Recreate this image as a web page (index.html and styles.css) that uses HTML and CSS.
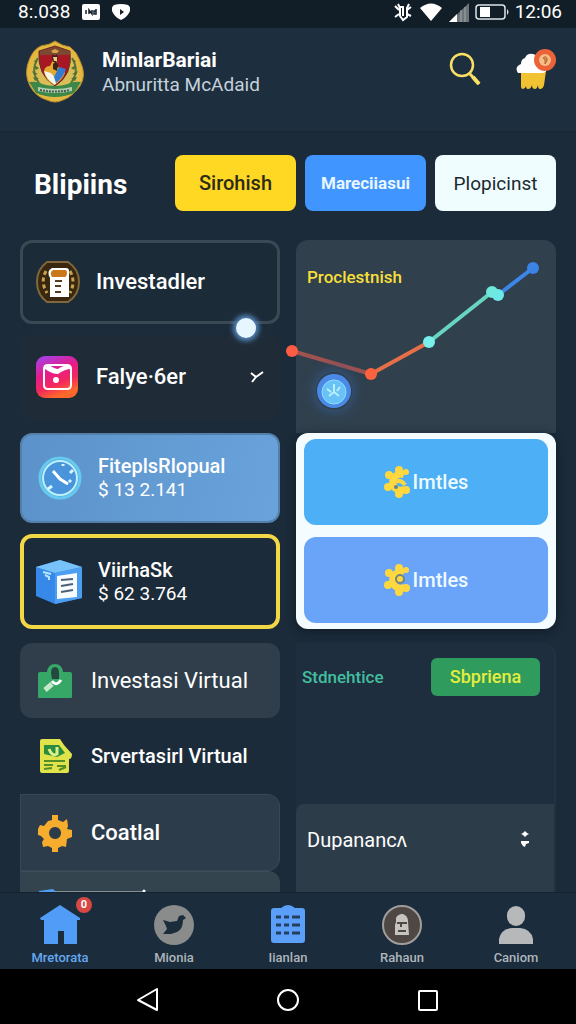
FILE: index.html
```html
<!DOCTYPE html>
<html lang="id">
  <head>
    <meta charset="UTF-8" />
    <meta name="viewport" content="width=device-width, initial-scale=1.0" />
    <title>MinlarBariai</title>
    <link rel="stylesheet" href="styles.css">
  </head>
  <body>
    <div class="status-bar">
      <span class="status-time">8:.038</span>
      <svg width="18" height="16" viewBox="0 0 18 16"><rect width="18" height="16" rx="2" fill="#fff"/><path d="M4 10V6M7 10V6l3 4V6M14 5v5h-2V7h2" fill="none" stroke="#14212b" stroke-width="1.5"/></svg>
      <svg width="18" height="16" viewBox="0 0 18 16"><path d="M2 1q7-2 14 0 4 3 1 8-3 5-8 7-5-2-8-7-3-5 1-8z" fill="#fff"/><path d="M8 5l4 3-4 3z" fill="#14212b"/></svg>
      <div class="status-right">
        <svg width="20" height="20" viewBox="0 0 20 20" fill="none" stroke="#fff" stroke-width="2"><path d="M5 2l2 4v8l3 4 4-3V6l2-4M10 4v10M2 4l4 4M2 15l4-3M18 5l-4 3M18 14l-4-2M7 5h3"/></svg>
        <svg width="24" height="18" viewBox="0 0 24 18"><path d="M1 5Q12-4 23 5L12 18z" fill="#fff"/></svg>
        <svg width="20" height="19" viewBox="0 0 20 19"><path d="M20 0v19H0z" fill="#6c7479"/><path d="M8 11v8H0z" fill="#fff"/><path d="M12 7v12M16 4v15" stroke="#a4a9ac"/></svg>
        <svg width="34" height="16" viewBox="0 0 34 16"><rect x="1" y="1" width="29" height="14" rx="3" fill="none" stroke="#dfe5e8" stroke-width="1.5"/><path d="M32 5q3 3 0 6z" fill="#dfe5e8"/><rect x="5" y="3" width="10" height="10" fill="#fff"/></svg>
        <span class="status-time">12:06</span>
      </div>
    </div>

    <header class="header">
      <svg width="60" height="64" viewBox="0 0 60 64">
        <path d="M30 1q7 5 15 6 7 5 10 14 7 14 0 25-8 11-17 14-8 4-16 0Q11 57 5 46-2 33 5 18 9 9 16 6q9-1 14-5z" fill="#e4b83f" stroke="#b48a2b"/>
        <path d="M30 6q6 4 13 5 6 5 8 12 5 12 1 20-6 9-14 12-8 4-15 0Q12 51 8 43q-4-9 1-21 3-7 9-11 7-1 12-5z" fill="#d9bd58"/>
        <path d="M14 11l16-5 15 5q3 24-15 35Q12 35 14 11z" fill="#a81724" stroke="#603522"/>
        <path d="M15 11l15-4 15 4v4H15z" fill="#7b4931"/>
        <path d="M26 11l4-2 4 2-2 2h-4z" fill="#d8a24a"/>
        <path d="M19 31q1-5 6-5l3-6 4 1v6q7 1 8 6-3 8-11 12-9-5-10-14z" fill="#e2aa2f"/>
        <path d="M27 18l1-4 2 2 2-2 1 5-2 3h-3zM28 24l3-3 2 4-1 6-4-2z" fill="#3a2418"/>
        <path d="M28 17h4v4h-3z" fill="#f0cb82"/>
        <path d="M19 31l7 2 4 5 6-4-6 11q-9-6-11-14z" fill="#f4f4ea"/>
        <path d="M34 27l7 2q-3 9-10 14l-2-6z" fill="#337bd0"/>
        <path d="M13 18q-8 13 1 25M47 18q8 13-1 25" fill="none" stroke="#5a7436" stroke-width="2"/>
        <g fill="#52702d"><path d="M13 19l-4 2 2 3zM9 25l5 3-3 2zM7 31l6 3-4 1zM8 37l6 1-4 3zM47 19l4 2-2 3zM51 25l-5 3 3 2zM53 31l-6 3 4 1zM52 37l-6 1 4 3z"/></g>
        <path d="M4 42q9-1 13 2 13 4 26 0 4-3 13-2l-7 11q-19 8-38 0z" fill="#3d8748"/>
        <path d="M13 47q17 4 34 0v4q-17 4-34 0z" fill="#b5ceb0"/>
        <path d="M15 50q15 3 30 0" fill="none" stroke="#405f51" stroke-width="2" stroke-dasharray="2 1"/>
      </svg>
      <div class="profile">
        <h1 class="profile-name">MinlarBariai</h1>
        <p class="profile-sub">Abnuritta McAdaid</p>
      </div>
      <button class="icon-button" type="button" aria-label="Search">
        <svg width="32" height="34" viewBox="0 0 32 34" fill="none" stroke="#f9df62"><circle cx="13" cy="13" r="11" stroke-width="2.5"/><path d="M21 22l9 10" stroke-width="3"/><path d="M24 25l6 7" stroke-width="4"/></svg>
      </button>
      <button class="icon-button" type="button" aria-label="Rewards">
        <svg width="40" height="42" viewBox="0 0 40 42"><path d="M5 23h25l-2 14q-1 4-4 4-2 0-2-4-1 4-3 4-3 0-3-4-1 4-4 4-2 0-2-3-1 3-3 3-2 0-2-3z" fill="#f1c232"/><path d="M2 25q-4-6 3-9 0-5 4-6 2-5 8-4l8 3 6 12q-1 4-5 4z" fill="#fff"/><circle cx="29" cy="12" r="11" fill="#ec6339"/><circle cx="29" cy="12" r="6" fill="#f7bd86"/><path d="M27 10q3-3 4 0 1 3-2 6v-4z" fill="#d98b43" stroke="#b5693a"/></svg>
      </button>
    </header>

    <main class="content">
      <div class="toolbar">
        <h2 class="toolbar-title">Blipiins</h2>
        <button class="pill pill-yellow" type="button">Sirohish</button>
        <button class="pill pill-blue" type="button">Mareciiasui</button>
        <button class="pill pill-white" type="button">Plopicinst</button>
      </div>

      <div class="columns">
        <div class="column">
          <a href="#" class="card card-outline">
            <svg width="44" height="42" viewBox="0 0 44 42"><path d="M11 1h21q11 7 11 20T32 41H11Q1 34 1 21T11 1z" fill="#39270f" stroke="#80683a" stroke-width="2"/><path d="M10 10q-6 11 1 22M34 10q6 11 0 22" fill="none" stroke="#c8a34e" stroke-width="3" stroke-dasharray="4 3"/><path d="M16 7h14q3 0 3 3v26H14V17q-4-7 2-10z" fill="#fff"/><path d="M17 9h12q2 0 2 3t-2 4H16q-3-4 1-7z" fill="#c97919"/><path d="M19 20h7M19 25h6M19 31h6" stroke="#583c22" stroke-width="2"/></svg>
            <span>Investadler</span>
            <i class="glow-dot"></i>
          </a>

          <button class="card card-toggle" type="button">
            <svg width="42" height="42" viewBox="0 0 42 42">
              <defs><linearGradient id="mail" x1="0" y1="0" x2="0.4" y2="1"><stop offset="0" stop-color="#9c47f5"/><stop offset="0.45" stop-color="#e51c8b"/><stop offset="0.75" stop-color="#f3285d"/><stop offset="1" stop-color="#ff672b"/></linearGradient></defs>
              <rect width="42" height="42" rx="9" fill="url(#mail)"/><path d="M8 13q0-4 4-4h19q4 0 4 4v16q0 4-4 4H12q-4 0-4-4z" fill="none" stroke="#fff" stroke-width="2"/><path d="M9 11l4-2q6 4 9 4 6-5 13-3v3q-6 0-13 5-6 0-13-5z" fill="#fff"/><circle cx="20" cy="24" r="3" fill="#fff"/>
            </svg>
            <span>Falye·6er</span>
            <svg class="chevron" width="14" height="12" viewBox="0 0 14 12" fill="none" stroke="#fff" stroke-width="2"><path d="M1 2l5 4 7-5M6 6l-4 5"/></svg>
          </button>

          <a href="#" class="card card-blue">
            <svg width="44" height="46" viewBox="0 0 44 46"><circle cx="22" cy="23" r="20" fill="#4d9ee0" stroke="#66caee" stroke-width="3"/><circle cx="22" cy="23" r="17" fill="#4a94db" stroke="#baf1fa" stroke-width="2"/><path d="M15 16l7 8 8 5" fill="none" stroke="#fff" stroke-width="3"/><path d="M32 18l3-3M10 34l4-3M25 9v2M31 27l2-2" stroke="#d4f7ff" stroke-width="3"/></svg>
            <span class="card-text">
              <strong>FiteplsRlopual</strong>
              <span>$ 13 2.141</span>
            </span>
          </a>

          <a href="#" class="card card-selected">
            <svg width="46" height="44" viewBox="0 0 46 44"><path d="M0 7L24 0l22 7v31l-27 6L0 36z" fill="#3689e9"/><path d="M0 7L24 0l22 7-27 6z" fill="#77c2f8"/><path d="M19 13l27-6v31l-27 6z" fill="#4d9df1"/><path d="M21 16l20-3v24l-20 2z" fill="#f8fcff"/><path d="M25 20l12-1M25 26l12-2M25 32l12-2" stroke="#4b6178" stroke-width="2"/><path d="M7 12l8 2M9 15l4 2v3" fill="none" stroke="#b8e6ff" stroke-width="2"/></svg>
            <span class="card-text">
              <strong>ViirhaSk</strong>
              <span>$ 62 3.764</span>
            </span>
          </a>

          <nav class="menu">
            <a href="#" class="menu-item menu-item-filled">
              <svg width="36" height="36" viewBox="0 0 36 36"><path d="M1 11q0-2 2-2h7q1-8 8-8t8 8h7q2 0 2 2v23q0 1-1 1H2q-1 0-1-1z" fill="#36a767"/><path d="M14 10q0-6 4-6t4 6v6h-7z" fill="#24483d"/><path d="M8 27l7-6" stroke="#c7e8cd" stroke-width="5"/><path d="M15 18q4 6 9-1" fill="none" stroke="#fff" stroke-width="3"/></svg>
              <span>Investasi Virtual</span>
            </a>
            <a href="#" class="menu-item menu-item-bold">
              <svg width="36" height="36" viewBox="0 0 36 36"><path d="M5 1h18l4 6 8 9q0 5-3 5v12q0 2-2 2H5q-2 0-2-2V3q0-2 2-2z" fill="#e1e34a"/><path d="M7 7h15l6 8-8 4-13-3z" fill="#2d8c3c"/><path d="M12 11q3 8 8 5V9" fill="none" stroke="#d9f18b" stroke-width="3"/><path d="M7 23h21M7 27h9M20 28h9M7 31l8-1M22 32l7-3" stroke="#548e29" stroke-width="2"/></svg>
              <span class="menu-label-long">Srvertasirl Virtual</span>
            </a>
            <a href="#" class="menu-item menu-item-filled menu-item-bold menu-item-joined">
              <svg width="36" height="38" viewBox="0 0 36 38"><path fill-rule="evenodd" d="M15 1h6v5l5 2 4-3 1 7-1 3 5 1v7l-5 2-1 8-4-1-4 2v4h-6v-4l-4-2-5 1-1-5 2-3-3-3-3-1V15l2-4 4 1 4-5 4-1zM18 13a6 6 0 1 0 .1 0z" fill="#f6ac2c"/></svg>
              <span>Coatlal</span>
            </a>
            <a href="#" class="menu-item menu-item-filled menu-item-last" aria-label="Lainnya">
              <svg width="112" height="36" viewBox="0 0 112 36"><path d="M2 2l14-2 4 4v30H2z" fill="#509df1"/><path d="M18 3h88" stroke="#d8dfe2"/><circle cx="107" cy="2" r="1.5" fill="#fff"/></svg>
            </a>
          </nav>
        </div>

        <div class="column">
          <section class="chart-card">
            <h3 class="chart-title">Proclestnish</h3>
            <svg class="chart-lines" viewBox="0 0 260 192">
              <g fill="none" stroke-width="4">
                <path d="M-4 111L75 134" stroke="#a05250"/>
                <path d="M75 134L133 102" stroke="#e66f48"/>
                <path d="M133 102L196 52" stroke="#68d5c2"/>
                <path d="M202 55L237 28" stroke="#3d86e9"/>
              </g>
              <circle cx="-4" cy="111" r="6" fill="#ff5c43"/>
              <circle cx="75" cy="134" r="6" fill="#ff633d"/>
              <circle cx="133" cy="102" r="6" fill="#78eeed"/>
              <circle cx="196" cy="52" r="6" fill="#6de8db"/>
              <circle cx="202" cy="55" r="6" fill="#6de8e6"/>
              <circle cx="237" cy="28" r="6" fill="#3c83e8"/>
            </svg>
            <svg class="chart-marker" width="36" height="38" viewBox="0 0 36 38"><circle cx="18" cy="19" r="17" fill="#4a8ae6"/><circle cx="18" cy="20" r="12" fill="#69c2f5" stroke="#8ddcff"/><path d="M18 12v8l-5 4M18 20l5 4M11 17l4 3M24 15l-3 4" fill="none" stroke="#b8efff" stroke-width="2"/></svg>
          </section>

          <section class="actions">
            <button class="action action-sky" type="button">
              <svg width="26" height="32" viewBox="0 0 26 32">
                <path d="M20 9A8 8 0 1 0 21 23" fill="none" stroke="#ffd83f" stroke-width="7"/>
                <g fill="#ffd83f"><circle cx="15" cy="4" r="4"/><circle cx="22" cy="6" r="3"/><circle cx="5" cy="9" r="4"/><circle cx="4" cy="21" r="4"/><circle cx="15" cy="28" r="4"/><circle cx="22" cy="24" r="4"/></g>
                <path d="M12 16q5-3 9 3" fill="none" stroke="#ffd83f" stroke-width="4"/><circle cx="12" cy="21" r="2" fill="#63828a"/>
              </svg>
              Imtles
            </button>
            <button class="action action-violet" type="button">
              <svg width="26" height="32" viewBox="0 0 26 32">
                <path d="M20 9A8 8 0 1 0 21 23" fill="none" stroke="#ffd83f" stroke-width="7"/>
                <g fill="#ffd83f"><circle cx="15" cy="4" r="4"/><circle cx="22" cy="6" r="3"/><circle cx="5" cy="9" r="4"/><circle cx="4" cy="21" r="4"/><circle cx="15" cy="28" r="4"/><circle cx="22" cy="24" r="4"/></g>
                <circle cx="16" cy="15" r="4" fill="#ffd83f" stroke="#70877f" stroke-width="2"/>
              </svg>
              Imtles
            </button>
          </section>

          <section class="summary">
            <div class="summary-head">
              <span class="summary-label">Stdnehtice</span>
              <button class="summary-button" type="button">Sbpriena</button>
            </div>
            <label class="picker">
              <select class="picker-select" aria-label="Dupanan">
                <option>Dupanancʌ</option>
              </select>
              <svg width="10" height="18" viewBox="0 0 10 18"><path d="M5 1l2 2 2 1-2 1-2 2-2-2-2-1 2-1zM1 11h8v2l-3 1-1 3-2-1-2-3z" fill="#fff"/></svg>
            </label>
          </section>
        </div>
      </div>
    </main>

    <nav class="tab-bar">
      <a href="#" class="tab tab-active">
        <span class="tab-icon">
          <svg width="40" height="42" viewBox="0 0 40 42"><path d="M20 1L0 14l1 2h3v24h14V27h6v13h13V16h3v-2z" fill="#519cf7"/></svg>
          <span class="tab-badge">0</span>
        </span>
        Mretorata
      </a>
      <a href="#" class="tab">
        <span class="tab-icon">
          <svg width="42" height="42" viewBox="0 0 42 42"><circle cx="21" cy="21" r="20" fill="#8a8b8b"/><path d="M10 16l7 2 7-1 2-5 4-1 3 3-3 2q0 9-6 12l-6 2h-8l4-5-1-3z" fill="#1b2c3b"/></svg>
        </span>
        Mionia
      </a>
      <a href="#" class="tab">
        <span class="tab-icon">
          <svg width="36" height="42" viewBox="0 0 36 42"><path d="M4 4h7q7-6 14 0h7q3 0 3 3v29q0 3-3 3H4q-3 0-3-3V7q0-3 3-3z" fill="#5b9ff8"/><path d="M6 13h5M14 13h5M22 13h8M6 21h5M14 21h5M22 21h8M6 29h5M14 29h5M22 29h8" stroke="#233e5e" stroke-width="3"/></svg>
        </span>
        Iianlan
      </a>
      <a href="#" class="tab">
        <span class="tab-icon">
          <svg width="42" height="42" viewBox="0 0 42 42"><circle cx="21" cy="21" r="19" fill="#4e4744" stroke="#a09e9b" stroke-width="2"/><path d="M15 18v-4q1-3 5-4h2q5 2 5 7l1 14H14V21z" fill="#c7c3bf"/><path d="M16 19h10M20 20v3M17 27h8" stroke="#4e4744" stroke-width="2"/></svg>
        </span>
        Rahaun
      </a>
      <a href="#" class="tab">
        <span class="tab-icon">
          <svg width="36" height="42" viewBox="0 0 36 42"><rect x="9" y="2" width="18" height="20" rx="9" fill="#b7b8b9"/><path d="M1 40V35q2-10 13-11h8q11 1 13 11v5z" fill="#b7b8b9"/></svg>
        </span>
        Caniom
      </a>
    </nav>

    <div class="system-bar">
      <button class="system-button" type="button" aria-label="Back">
        <svg width="24" height="26" viewBox="0 0 24 26"><path d="M21 2v21L2 13z" fill="none" stroke="#fff" stroke-width="2" stroke-linejoin="round"/></svg>
      </button>
      <button class="system-button" type="button" aria-label="Home">
        <svg width="24" height="26" viewBox="0 0 24 26"><circle cx="12" cy="13" r="10" fill="none" stroke="#fff" stroke-width="2"/></svg>
      </button>
      <button class="system-button" type="button" aria-label="Recent apps">
        <svg width="24" height="26" viewBox="0 0 24 26"><rect x="3" y="4" width="18" height="19" rx="1" fill="none" stroke="#fff" stroke-width="2"/></svg>
      </button>
    </div>
  </body>
</html>
```

FILE: styles.css
```css
* {
  box-sizing: border-box;
}

body {
  display: flex;
  flex-direction: column;
  height: 100vh;
  margin: 0;
  background-color: #1b2b3a;
  color: #fff;
  font-family: Roboto, "Liberation Sans", sans-serif;
}

h1,
h2,
h3,
p {
  margin: 0;
}

a {
  color: inherit;
  text-decoration: none;
}

button,
select {
  border: none;
  background: none;
  padding: 0;
  color: inherit;
  font-family: inherit;
  cursor: pointer;
}

svg {
  display: block;
  flex-shrink: 0;
}

/* Status bar */
.status-bar {
  display: flex;
  align-items: center;
  gap: 12px;
  flex-shrink: 0;
  height: 28px;
  padding: 0 14px 4px 18px;
  background-color: #111e28;
}

.status-time {
  font-size: 19px;
  line-height: 24px;
}

.status-right {
  display: flex;
  align-items: center;
  gap: 6px;
  margin-left: auto;
}

/* Header */
.header {
  display: flex;
  align-items: flex-start;
  flex-shrink: 0;
  height: 105px;
  padding: 12px 20px 0 25px;
  background-color: #1d2e3e;
  border-bottom: 2px solid #192735;
}

.profile {
  flex: 1;
  padding: 7px 0 0 17px;
}

.profile-name {
  font-size: 21px;
  font-weight: 700;
  line-height: 26px;
}

.profile-sub {
  color: #c5d1db;
  font-size: 19px;
  line-height: 24px;
}

.icon-button {
  display: flex;
  align-items: center;
  height: 58px;
  margin-left: 35px;
}

/* Content */
.content {
  flex: 1;
  min-height: 0;
  padding: 22px 20px 0;
  overflow: hidden;
}

.toolbar {
  display: flex;
  align-items: center;
  gap: 9px;
  margin-bottom: 29px;
}

.toolbar-title {
  flex: 1;
  padding: 4px 0 0 14px;
  font-size: 28px;
  font-weight: 700;
  line-height: 32px;
}

.pill {
  width: 121px;
  height: 56px;
  border-radius: 8px;
}

.pill-yellow {
  background-color: #ffd823;
  color: #2c2b18;
  font-size: 20px;
  font-weight: 500;
}

.pill-blue {
  background-color: #4195fe;
  color: #e8f7ff;
  font-size: 17px;
  font-weight: 700;
}

.pill-white {
  background-color: #effdff;
  color: #20282e;
  font-size: 19px;
}

.columns {
  display: grid;
  grid-template-columns: 1fr 1fr;
  gap: 16px;
}

.column {
  display: flex;
  flex-direction: column;
  min-width: 0;
}

/* Cards */
.card {
  position: relative;
  display: flex;
  align-items: center;
  gap: 16px;
  width: 100%;
  padding: 0 16px;
  border-radius: 12px;
  font-size: 22px;
  font-weight: 500;
  line-height: 26px;
  text-align: left;
}

.card-outline {
  z-index: 1;
  height: 84px;
  margin-bottom: 11px;
  padding: 0 13px;
  border: 3px solid #3b4955;
  background-color: #1c2b38;
}

.glow-dot {
  position: absolute;
  right: 21px;
  bottom: -17px;
  width: 20px;
  height: 20px;
  border-radius: 50%;
  background-color: #e6f6ff;
  box-shadow: 0 0 5px 3px #5688bd;
}

.card-toggle {
  height: 84px;
  margin-bottom: 14px;
  gap: 18px;
  background-color: #1f2c38;
}

.chevron {
  margin-left: auto;
}

.card-blue {
  height: 90px;
  margin-bottom: 11px;
  border: 2px solid #547fa8;
  background-image: linear-gradient(100deg, #5b92c9, #6aa3dc);
}

.card-selected {
  height: 95px;
  margin-bottom: 14px;
  padding: 0 12px;
  border: 4px solid #f2d747;
  background-color: #1b2b39;
}

.card-text {
  display: flex;
  flex-direction: column;
  font-size: 19px;
  font-weight: 400;
  line-height: 24px;
}

.card-text strong {
  font-size: 20px;
  font-weight: 500;
}

/* Menu list */
.menu-item {
  display: flex;
  align-items: center;
  gap: 18px;
  height: 76px;
  padding: 0 17px;
  font-size: 22px;
  white-space: nowrap;
}

.menu-item-bold {
  font-weight: 500;
}

.menu-label-long {
  font-size: 20px;
}

.menu-item-filled {
  height: 75px;
  border-radius: 12px;
  background-color: #2f3e4a;
}

.menu-item-joined {
  height: 77px;
  border: 1px solid #384855;
  border-radius: 0 12px 12px 0;
  padding-left: 16px;
  background-color: #2c3c4a;
}

.menu-item-last {
  align-items: flex-start;
  padding-top: 17px;
  border-top: 1px solid #3b4d57;
  border-radius: 0 12px 0 0;
  background-color: #33444e;
}

/* Chart */
.chart-card {
  position: relative;
  height: 193px;
  padding: 24px 11px;
  border-radius: 12px 12px 0 0;
  background-color: #30404d;
}

.chart-title {
  color: #f6df3a;
  font-size: 17px;
  font-weight: 500;
  line-height: 26px;
}

.chart-lines {
  position: absolute;
  top: 0;
  left: 0;
  width: 100%;
  overflow: visible;
}

.chart-marker {
  position: absolute;
  top: 132px;
  left: 20px;
  border-radius: 50%;
  box-shadow: 0 0 12px 3px #34537a;
}

/* Action buttons */
.actions {
  position: relative;
  display: flex;
  flex-direction: column;
  gap: 12px;
  margin-bottom: 14px;
  padding: 6px 8px;
  border-radius: 12px;
  background-color: #f4fcff;
  box-shadow: 0 2px 10px #111c26;
}

.action {
  display: flex;
  align-items: center;
  justify-content: center;
  gap: 3px;
  height: 86px;
  border-radius: 12px;
  color: #effaff;
  font-size: 20px;
  font-weight: 500;
}

.action-sky {
  background-color: #4daff5;
}

.action-violet {
  background-color: #69a4f9;
}

/* Summary */
.summary {
  display: flex;
  flex: 1;
  flex-direction: column;
  border-right: 2px solid #223241;
  border-radius: 0 12px 0 0;
  background-color: #1f2e3e;
}

.summary-head {
  display: flex;
  align-items: center;
  justify-content: space-between;
  height: 161px;
  padding: 0 14px 94px 6px;
}

.summary-label {
  color: #43be9f;
  font-size: 17px;
  font-weight: 500;
}

.summary-button {
  width: 109px;
  height: 38px;
  border-radius: 6px;
  background-color: #2f9b5c;
  color: #e4ed3e;
  font-size: 18px;
  font-weight: 500;
}

.picker {
  display: flex;
  align-items: flex-start;
  justify-content: space-between;
  flex: 1;
  padding: 26px 24px 0 11px;
  border-radius: 8px 0 0 0;
  background-color: #2d3c49;
}

.picker-select {
  appearance: none;
  flex: 1;
  font-size: 20px;
  line-height: 20px;
}

/* Bottom tabs */
.tab-bar {
  display: flex;
  flex-shrink: 0;
  height: 77px;
  padding: 0 3px;
  border-top: 1px solid #15222d;
  background-color: #1b2c3c;
}

.tab {
  display: flex;
  flex: 1;
  flex-direction: column;
  align-items: center;
  gap: 4px;
  padding-top: 11px;
  color: #aeb5bb;
  font-size: 13px;
  font-weight: 500;
  line-height: 16px;
}

.tab-active {
  color: #65a8f0;
}

.tab-icon {
  position: relative;
}

.tab-badge {
  position: absolute;
  top: -7px;
  right: -12px;
  width: 16px;
  height: 16px;
  border-radius: 50%;
  background-color: #d84843;
  color: #fff;
  font-size: 11px;
  font-weight: 700;
  text-align: center;
}

/* System navigation */
.system-bar {
  display: flex;
  align-items: center;
  justify-content: center;
  gap: 116px;
  flex-shrink: 0;
  height: 55px;
  padding-top: 6px;
  background-color: #000;
}
```
